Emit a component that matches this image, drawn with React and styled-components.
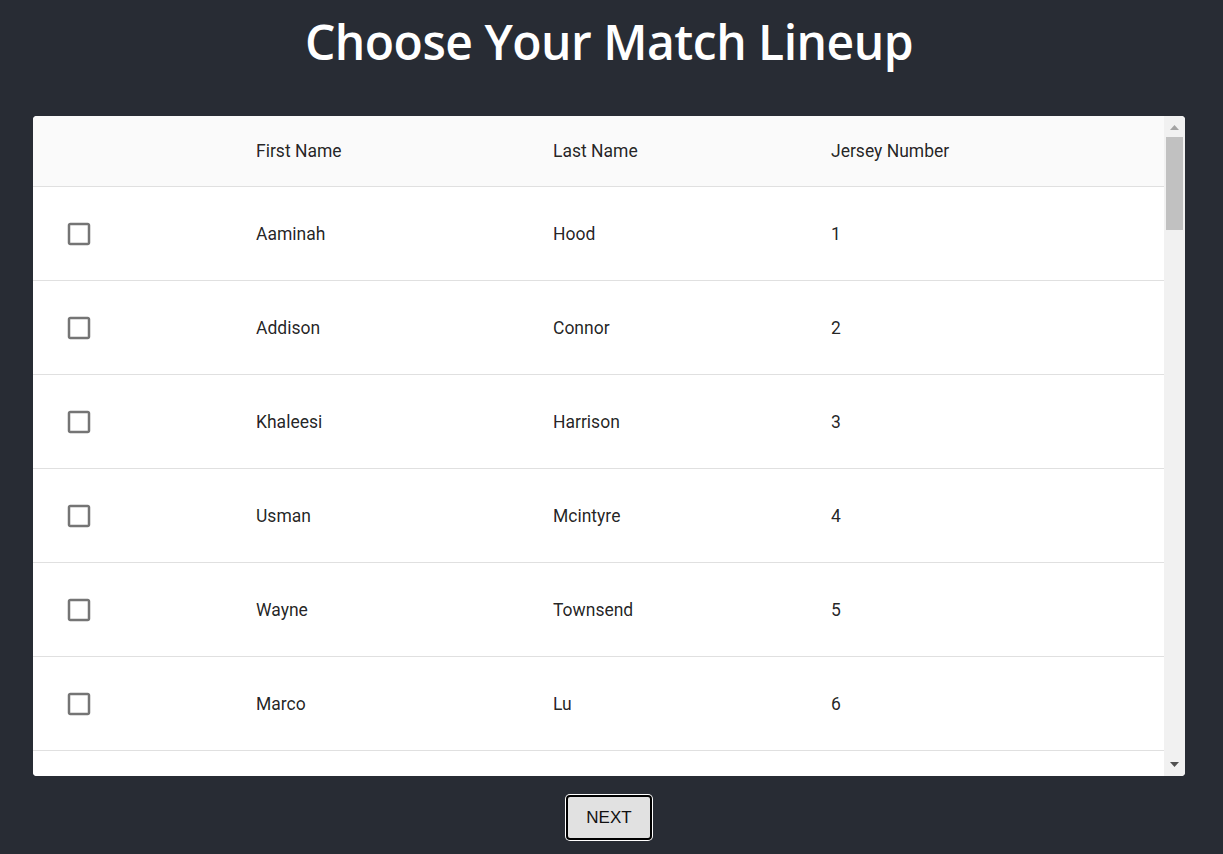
import React, { useState } from 'react'
import styled, { createGlobalStyle } from 'styled-components'

const GlobalStyle = createGlobalStyle`
  html, body {
    margin: 0;
    padding: 0;
    background: #282c34;
  }
  * { box-sizing: border-box; }
`

const players = [
  ['Aaminah', 'Hood'], ['Addison', 'Connor'], ['Khaleesi', 'Harrison'], ['Usman', 'Mcintyre'],
  ['Wayne', 'Townsend'], ['Marco', 'Lu'], ['Rhys', 'Dalton'], ['Ellis', 'Wharton'],
  ['Kian', 'Bates'], ['Jamal', 'Pratt'], ['Tomas', 'Rivera'], ['Leo', 'Hayward'],
  ['Dylan', 'Shaw'], ['Ryan', 'Kirk'], ['Omar', 'Hicks'], ['Felix', 'Nolan'],
  ['Isaac', 'Barker'], ['Noah', 'Webb'], ['Ethan', 'Doyle'], ['Aiden', 'Frost'],
  ['Luca', 'Mendez'], ['Zain', 'Rowe'], ['Caleb', 'Hart'], ['Owen', 'Burke'],
  ['Finn', 'Carver'], ['Mason', 'Blake'], ['Harvey', 'Ward'], ['Toby', 'Lane'],
  ['Jude', 'Morrow'], ['Reece', 'Fleming'], ['Ali', 'Khan'], ['Max', 'Dunn'],
  ['Sam', 'Fowler'], ['Adam', 'Price'], ['Ben', 'Marsh'], ['Jack', 'Pearce'],
  ['Oscar', 'Lloyd'], ['Hugo', 'Payne'], ['Ruben', 'Hale'], ['Theo', 'Grant'],
  ['Mateo', 'Cross'], ['Nathan', 'Reid'], ['Kai', 'Stone'], ['Ezra', 'Cole'],
  ['Louis', 'Berry'], ['Arlo', 'Wells'],
]

const VIEW = 660
const CONTENT = 71 + players.length * 94
const TRACK = VIEW - 42

const Page = styled.div`
  min-height: 100vh;
  padding: 0 38px 0 33px;
  display: flex;
  flex-direction: column;
  align-items: center;
`

const Title = styled.h1`
  margin: 8px 0 0;
  height: 108px;
  line-height: 68px;
  color: #fff;
  font-family: "Open Sans", "Noto Sans", sans-serif;
  font-weight: 600;
  font-size: 48px;
  letter-spacing: -0.5px;
`

const Card = styled.div`
  width: 100%;
  height: ${VIEW}px;
  display: flex;
  background: #fff;
  border-radius: 4px;
  overflow: hidden;
  font-family: Roboto, "Noto Sans", sans-serif;
  font-size: 17.5px;
  color: rgba(0, 0, 0, 0.87);
`

const Scroller = styled.div`
  flex: 1;
  overflow-y: auto;
  scrollbar-width: none;
  &::-webkit-scrollbar { display: none; }
`

const Rail = styled.div`
  width: 21px;
  flex-shrink: 0;
  display: flex;
  flex-direction: column;
  background: #f1f1f1;
`

const ArrowButton = styled.div`
  height: 21px;
  flex-shrink: 0;
  display: flex;
  color: ${p => (p.$dim ? '#a3a3a3' : '#505050')};
`

const Track = styled.div`
  flex: 1;
  padding: 0 2px;
`

const Thumb = styled.div`
  background: #c1c1c1;
`

const Row = styled.div`
  display: grid;
  grid-template-columns: 207px 297px 278px 1fr;
  align-items: center;
  height: ${p => (p.$head ? '71px' : '94px')};
  background: ${p => (p.$head ? '#fafafa' : '#fff')};
  border-bottom: 1px solid #e0e0e0;
`

const Cell = styled.div`
  padding-left: 16px;
  white-space: nowrap;
`

const CheckButton = styled.button`
  margin-left: 15px;
  padding: 0;
  width: 30px;
  height: 30px;
  border: 0;
  background: none;
  display: flex;
  cursor: pointer;
  color: ${p => (p.$on ? '#1976d2' : 'rgba(0, 0, 0, 0.54)')};
`

const Footer = styled.div`
  padding: 19px 0 0;
`

const NextButton = styled.button`
  font-family: "Liberation Sans", Arial, sans-serif;
  font-size: 17px;
  line-height: 19px;
  color: #111;
  background: #e1e1e1;
  border: 2px solid #000;
  border-radius: 4px;
  box-shadow: 0 0 0 1px #fff;
  padding: 11px 18px;
  cursor: pointer;
`

const BoxIcon = ({ on }) => (
  <svg width="30" height="30" viewBox="0 0 24 24" fill="currentColor">
    {on ? (
      <path d="M19 3H5c-1.11 0-2 .9-2 2v14c0 1.1.89 2 2 2h14c1.11 0 2-.9 2-2V5c0-1.1-.89-2-2-2zm-9 14l-5-5 1.41-1.41L10 14.17l7.59-7.59L19 8l-9 9z" />
    ) : (
      <path d="M19 5v14H5V5h14m0-2H5c-1.1 0-2 .9-2 2v14c0 1.1.9 2 2 2h14c1.1 0 2-.9 2-2V5c0-1.1-.9-2-2-2z" />
    )}
  </svg>
)

const Arrow = ({ up }) => (
  <svg width="21" height="21" viewBox="0 0 21 21" fill="currentColor">
    {up ? <polygon points="6,14 15,14 10.5,9" /> : <polygon points="6,7 15,7 10.5,12" />}
  </svg>
)

export default function App() {
  const [picked, setPicked] = useState({})
  const [scrollTop, setScrollTop] = useState(0)
  const toggle = i => setPicked(s => ({ ...s, [i]: !s[i] }))

  const thumbHeight = (TRACK * VIEW) / CONTENT
  const thumbTop = (scrollTop / (CONTENT - VIEW)) * (TRACK - thumbHeight)

  return (
    <Page>
      <GlobalStyle />
      <Title>Choose Your Match Lineup</Title>
      <Card>
        <Scroller onScroll={e => setScrollTop(e.currentTarget.scrollTop)}>
          <Row $head>
            <Cell />
            <Cell>First Name</Cell>
            <Cell>Last Name</Cell>
            <Cell>Jersey Number</Cell>
          </Row>
          {players.map(([first, last], i) => (
            <Row key={i}>
              <Cell>
                <CheckButton $on={picked[i]} onClick={() => toggle(i)}>
                  <BoxIcon on={picked[i]} />
                </CheckButton>
              </Cell>
              <Cell>{first}</Cell>
              <Cell>{last}</Cell>
              <Cell>{i + 1}</Cell>
            </Row>
          ))}
        </Scroller>
        <Rail>
          <ArrowButton $dim={scrollTop === 0}>
            <Arrow up />
          </ArrowButton>
          <Track>
            <Thumb style={{ marginTop: thumbTop, height: thumbHeight }} />
          </Track>
          <ArrowButton>
            <Arrow />
          </ArrowButton>
        </Rail>
      </Card>
      <Footer>
        <NextButton>NEXT</NextButton>
      </Footer>
    </Page>
  )
}
